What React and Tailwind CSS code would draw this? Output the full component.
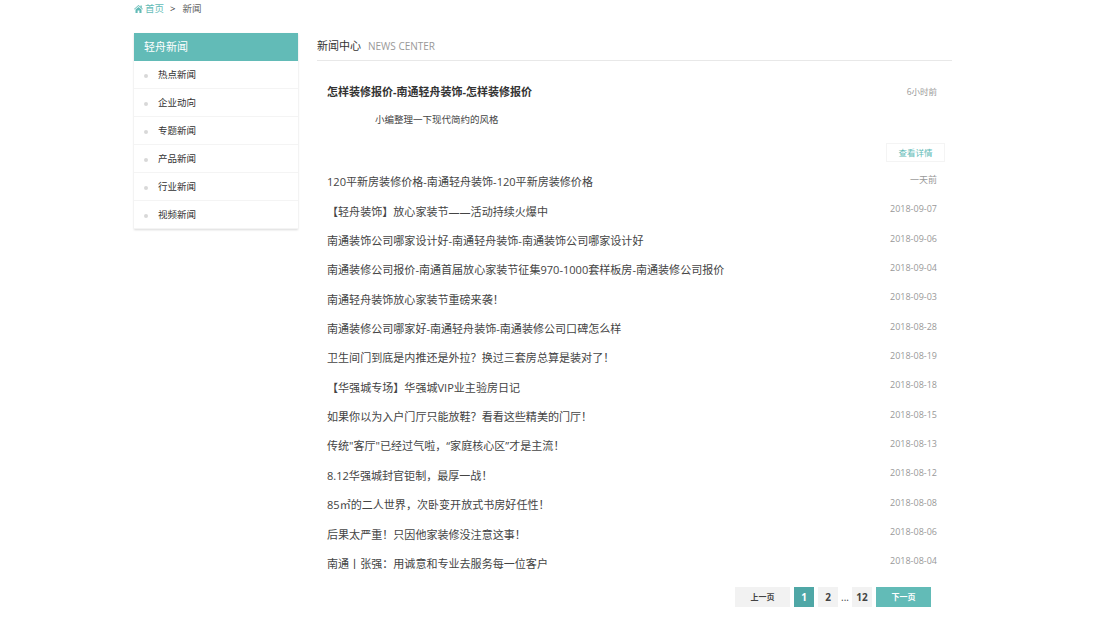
const menu = ["热点新闻", "企业动向", "专题新闻", "产品新闻", "行业新闻", "视频新闻"];

const news = [
  ["120平新房装修价格-南通轻舟装饰-120平新房装修价格", "一天前"],
  ["【轻舟装饰】放心家装节——活动持续火爆中", "2018-09-07"],
  ["南通装饰公司哪家设计好-南通轻舟装饰-南通装饰公司哪家设计好", "2018-09-06"],
  ["南通装修公司报价-南通首届放心家装节征集970-1000套样板房-南通装修公司报价", "2018-09-04"],
  ["南通轻舟装饰放心家装节重磅来袭！", "2018-09-03"],
  ["南通装修公司哪家好-南通轻舟装饰-南通装修公司口碑怎么样", "2018-08-28"],
  ["卫生间门到底是内推还是外拉？换过三套房总算是装对了！", "2018-08-19"],
  ["【华强城专场】华强城VIP业主验房日记", "2018-08-18"],
  ["如果你以为入户门厅只能放鞋？看看这些精美的门厅！", "2018-08-15"],
  ["传统\"客厅\"已经过气啦，“家庭核心区”才是主流！", "2018-08-13"],
  ["8.12华强城封官钜制，最厚一战！", "2018-08-12"],
  ["85㎡的二人世界，次卧变开放式书房好任性！", "2018-08-08"],
  ["后果太严重！只因他家装修没注意这事！", "2018-08-06"],
  ["南通丨张强：用诚意和专业去服务每一位客户", "2018-08-04"],
];

function HomeIcon() {
  return (
    <svg width="9" height="8" viewBox="0 0 18 16" fill="#62bbb7">
      <path d="M9 0 L13 3.4 V1 H15.5 V5.6 L18 7.8 L17 9 L9 2.2 L1 9 L0 7.8 Z" />
      <path d="M3 9.2 L9 4 L15 9.2 V16 H10.8 V11 H7.2 V16 H3 Z" />
    </svg>
  );
}

function App() {
  return (
    <div className="w-[1100px] h-[618px] overflow-hidden bg-white text-[#333] font-['Open_Sans','Noto_Sans_CJK_SC',sans-serif]">
      <div className="ml-[134px] w-[818px]">
        <div className="h-[33px] pt-[2px] flex items-start gap-[6px] text-[9.5px] leading-[14px]">
          <span className="flex items-center gap-[2px] text-[#62bbb7]">
            <HomeIcon />
            首页
          </span>
          <span>&gt;</span>
          <span className="ml-[1px] text-[#666]">新闻</span>
        </div>

        <div className="flex">
          <div className="w-[164px] shrink-0 self-start shadow-[0_1px_2px_rgba(0,0,0,0.15)]">
            <div className="h-[28px] bg-[#62bbb7] pl-[10px] text-white text-[11px] leading-[28px]">轻舟新闻</div>
            <ul>
              {menu.map((m) => (
                <li key={m} className="h-[28px] flex items-center pl-[10px] pt-[2px] gap-[10px] border-b border-[#f4f4f4] text-[9.5px] text-[#333]">
                  <span className="w-[4px] h-[4px] rounded-full bg-[#d8d8d8]"></span>
                  {m}
                </li>
              ))}
            </ul>
          </div>

          <div className="ml-[19px] flex-1">
            <div className="h-[28px] border-b border-[#e8e8e8] flex items-center gap-[7px]">
              <span className="text-[11px]">新闻中心</span>
              <span className="text-[10px] text-[#999]">NEWS CENTER</span>
            </div>

            <div className="mt-[18px] pl-[10px] pr-[15px] flex justify-between items-center h-[26px]">
              <span className="text-[11px] font-bold text-[#333]">怎样装修报价-南通轻舟装饰-怎样装修报价</span>
              <span className="text-[8.5px] text-[#999] mt-[1px]">6小时前</span>
            </div>
            <p className="mt-[8px] pl-[58px] text-[9.5px] leading-[14px] text-[#444]">小编整理一下现代简约的风格</p>
            <div className="mt-[16px] flex justify-end pr-[7px]">
              <span className="w-[59px] h-[19px] border border-[#f4f4f4] text-[#62bbb7] text-[8.5px] leading-[18px] text-center">查看详情</span>
            </div>

            <ul className="mt-[6px]">
              {news.map(([t, d]) => (
                <li key={t} className="h-[29.35px] pl-[10px] pr-[15px] flex justify-between items-center">
                  <span className="text-[11.05px] text-[#444]">{t}</span>
                  <span className="text-[9px] text-[#999] -mt-[6px]">{d}</span>
                </li>
              ))}
            </ul>

            <div className="mt-[8px] pr-[21px] flex justify-end items-center h-[21px] text-[10px] text-[#444]">
              <span className="w-[55px] h-[20px] bg-[#f2f2f2] text-center text-[8px] leading-[20px] font-bold">上一页</span>
              <span className="ml-[4px] w-[20px] h-[20px] bg-[#4fa7a6] text-white font-bold text-center leading-[20px]">1</span>
              <span className="ml-[4px] w-[20px] h-[20px] bg-[#f2f2f2] font-bold text-center leading-[20px]">2</span>
              <span className="w-[14px] text-center">...</span>
              <span className="w-[20px] h-[20px] bg-[#f2f2f2] font-bold text-center leading-[20px]">12</span>
              <span className="ml-[4px] w-[55px] h-[20px] bg-[#62bbb7] text-white text-center text-[8px] leading-[20px] font-bold">下一页</span>
            </div>
          </div>
        </div>
      </div>
    </div>
  );
}

export default App;
